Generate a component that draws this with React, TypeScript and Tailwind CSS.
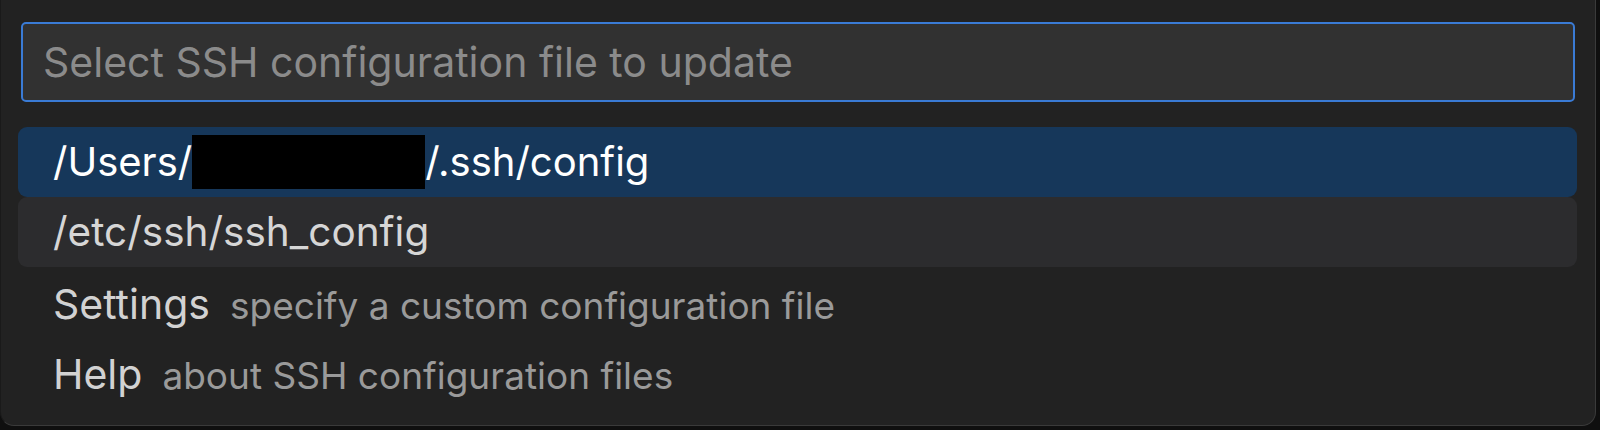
import React from "react";

const items = [
  { label: "Settings", detail: "specify a custom configuration file" },
  { label: "Help", detail: "about SSH configuration files" },
];

export default function App() {
  return (
    <div className="w-[1600px] h-[430px] bg-[#0f0f0f] overflow-hidden font-['Inter','Liberation_Sans',sans-serif]">
      <div className="w-[1596px] h-[426px] bg-[#222222] border-x border-b border-[#3a3a3a] border-l-[#1a1a1a] rounded-b-[14px] pt-[22px] px-[20px]">
        {/* search input */}
        <div className="h-[80px] w-[1554px] rounded-[5px] border-2 border-[#3a7bd5] bg-[#313131] flex items-center px-[20px]">
          <span className="text-[41px] leading-none text-[#8b8b8b]">
            Select SSH configuration file to update
          </span>
        </div>

        {/* list */}
        <div className="mt-[25px] -ml-[3px] w-[1559px] flex flex-col">
          <div className="h-[70px] rounded-[9px] bg-[#16375a] flex items-center pl-[35px] text-white text-[40px] leading-none">
            <span>/Users/</span>
            <span className="inline-block w-[233px] h-[54px] bg-black" />
            <span>/.ssh/config</span>
          </div>
          <div className="h-[70px] rounded-[9px] bg-[#2c2c2e] flex items-center pl-[35px] text-[#d6d6d6] text-[40.5px] leading-none">
            /etc/ssh/ssh_config
          </div>
          {items.map((it) => (
            <div key={it.label} className="h-[70px] flex items-baseline pt-[17px] pl-[35px] gap-[20px]">
              <span className="text-[41px] leading-none text-[#d2d2d2]">{it.label}</span>
              <span className="text-[37px] leading-none text-[#9a9a9a]">{it.detail}</span>
            </div>
          ))}
        </div>
      </div>
    </div>
  );
}
